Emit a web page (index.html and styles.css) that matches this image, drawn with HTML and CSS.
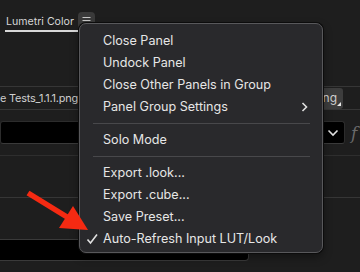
FILE: index.html
```html
<!DOCTYPE html>
<html lang="en">
<head>
    <meta charset="UTF-8">
    <title>Lumetri Color panel menu</title>
    <link rel="stylesheet" href="styles.css">
</head>
<body>
    <div class="panel">
        <div class="tabbar">
            <span class="tab">Lumetri Color</span>
            <span class="tab-menu">
                <svg width="17" height="17" viewBox="0 0 17 17"><path d="M4.5 5.5h8M4.5 8.5h8M4.5 11.5h8" stroke="#c8c8c8" stroke-width="1.2" fill="none"/></svg>
            </span>
        </div>
        <div class="source-row">
            <div class="source-name">e Tests_1.1.1.png</div>
            <span class="source-btn">png<i class="corner"></i></span>
        </div>
        <div class="select-row">
            <div class="select">
                <svg width="12" height="8" viewBox="0 0 12 8"><path d="M1.5 1.5l4.5 4.5 4.5-4.5" stroke="#e0e0e0" stroke-width="1.6" fill="none"/></svg>
            </div>
            <span class="fx">f</span>
        </div>
        <div class="divider"></div>
        <div class="divider lower"></div>
        <div class="input"></div>
    </div>

    <div class="menu">
        <div class="item">Close Panel</div>
        <div class="item">Undock Panel</div>
        <div class="item">Close Other Panels in Group</div>
        <div class="item">Panel Group Settings
            <svg class="sub" width="8" height="10" viewBox="0 0 8 10"><path d="M1.5 1l4 4-4 4" stroke="#e0e0e0" stroke-width="1.6" fill="none"/></svg>
        </div>
        <div class="sep"></div>
        <div class="item">Solo Mode</div>
        <div class="sep"></div>
        <div class="item">Export .look...</div>
        <div class="item">Export .cube...</div>
        <div class="item">Save Preset...</div>
        <div class="item checked">
            <svg class="check" width="22" height="22" viewBox="0 0 22 22"><path d="M7.5 11.5l3 3.5 6.5-8.5" stroke="#e0e0e0" stroke-width="1.6" fill="none"/></svg>
            Auto-Refresh Input LUT/Look
        </div>
    </div>

    <svg class="arrow" width="360" height="272" viewBox="0 0 360 272">
        <path d="M28 193L67 217" stroke="#f52a12" stroke-width="5.5" stroke-linecap="butt"/>
        <polygon points="59,228 73,206 88,230" fill="#f52a12"/>
    </svg>
</body>
</html>
```

FILE: styles.css
```css
* {
    box-sizing: border-box;
    margin: 0;
    padding: 0;
}
body {
    width: 360px;
    height: 272px;
    overflow: hidden;
    background: #1e1e1e;
    font-family: Inter, "Liberation Sans", sans-serif;
    position: relative;
}
.panel {
    width: 360px;
}
.tabbar {
    height: 33px;
    display: flex;
    align-items: flex-start;
    padding: 12px 0 0 5px;
}
.tab {
    width: 73px;
    padding: 3px 0 1px 1px;
    font-size: 10.6px;
    line-height: 14px;
    white-space: nowrap;
    color: #d6d6d6;
    border-bottom: 2px solid #d8d8d8;
}
.tab-menu {
    width: 17px;
    height: 17px;
    border-radius: 4px;
    background: #3a3a3a;
    display: flex;
}
.source-row {
    margin-top: 53px;
    height: 24px;
    border-top: 1px solid #363636;
    border-bottom: 1px solid #363636;
    display: flex;
    align-items: center;
    justify-content: space-between;
}
.source-name {
    width: 79px;
    padding-left: 0;
    white-space: nowrap;
    font-size: 10.9px;
    letter-spacing: -0.2px;
    color: #cfcfcf;
}
.source-btn {
    position: relative;
    width: 36px;
    height: 21px;
    margin-right: 17px;
    border-radius: 3px;
    background: #3d3d3d;
    font-size: 12px;
    line-height: 19px;
    color: #cfcfcf;
    text-align: right;
    padding-right: 6px;
}
.corner {
    position: absolute;
    right: 2px;
    bottom: 3px;
    width: 0;
    height: 0;
    border-left: 4px solid transparent;
    border-bottom: 4px solid #e8e8e8;
}
.select-row {
    margin-top: 11px;
    height: 23px;
    display: flex;
    align-items: center;
}
.select {
    width: 345px;
    height: 23px;
    background: #000;
    border: 1px solid #2c2c2c;
    border-bottom-color: #3a3a3a;
    border-radius: 3px;
    display: flex;
    align-items: center;
    justify-content: flex-end;
    padding-right: 5px;
}
.fx {
    margin-left: 6px;
    font-family: "DejaVu Serif", serif;
    font-style: italic;
    font-size: 17px;
    color: #6a6a6a;
}
.divider {
    margin-top: 11px;
    height: 1px;
    background: #2e2e2e;
}
.divider.lower {
    margin-top: 41px;
    background: #363636;
}
.input {
    margin-top: 41px;
    width: 249px;
    height: 22px;
    background: #000;
    border: 1px solid #3a3a3a;
    border-left: none;
    border-radius: 0 4px 4px 0;
}
.menu {
    position: absolute;
    left: 79px;
    top: 23px;
    width: 244px;
    padding: 6px 0 2px;
    background: #29292c;
    border: 1px solid #58585b;
    border-radius: 7px;
    box-shadow: 0 0 0 1px #0c0c0c, 0 4px 10px rgba(0, 0, 0, 0.4);
}
.item {
    position: relative;
    height: 22px;
    line-height: 22px;
    padding-left: 23px;
    font-size: 12.6px;
    color: #e6e6e6;
    white-space: nowrap;
}
.sub {
    position: absolute;
    right: 13px;
    top: 6px;
}
.check {
    position: absolute;
    left: 0;
    top: 0;
}
.sep {
    height: 1px;
    margin: 5px 12px 5px 13px;
    background: #48484b;
}
.arrow {
    position: absolute;
    left: 0;
    top: 0;
    pointer-events: none;
}
```
